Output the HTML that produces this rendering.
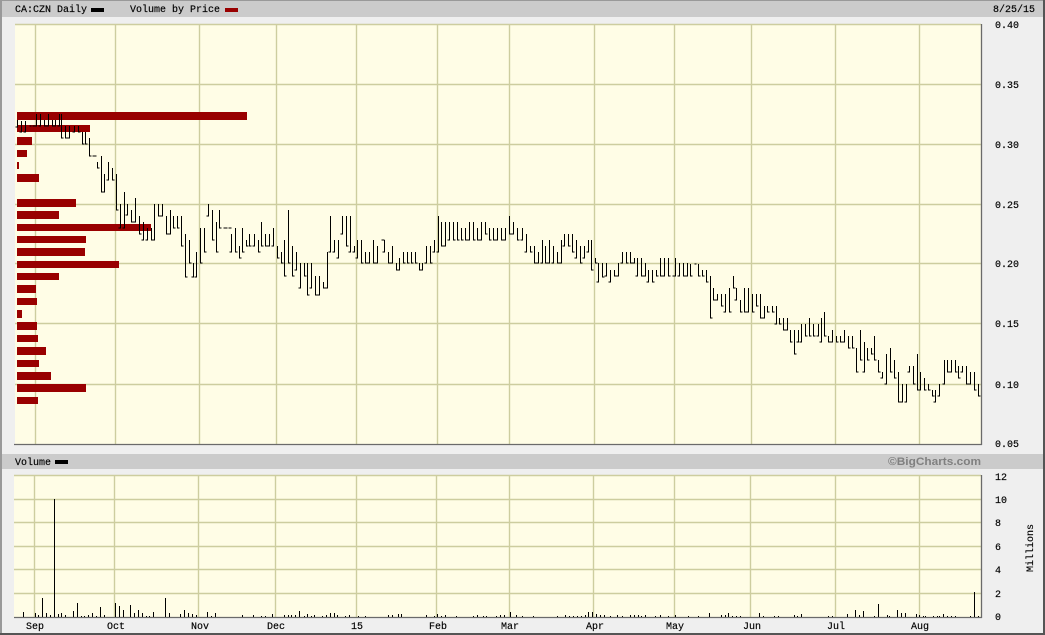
<!DOCTYPE html>
<html><head><meta charset="utf-8"><title>CA:CZN Daily</title>
<style>html,body{margin:0;padding:0;background:#eee;overflow:hidden}svg{display:block}text{font-family:"Liberation Mono",monospace;font-size:10px;fill:#000;stroke:#000;stroke-width:.15px}</style></head>
<body>
<svg width="1045" height="635" viewBox="0 0 1045 635" xmlns="http://www.w3.org/2000/svg">
<rect width="1045" height="635" fill="#efefef"/>
<rect x="2" y="1" width="1041" height="16" fill="#cbcbcb"/>
<rect x="2" y="454" width="1041" height="15" fill="#cbcbcb"/>
<path d="M0.5 0V635" stroke="#999" stroke-width="3" fill="none"/>
<rect x="0" y="0" width="1045" height="1" fill="#999"/>
<rect x="1043" y="0" width="2" height="635" fill="#555"/>
<rect x="0" y="633" width="1045" height="2" fill="#555"/>

<!-- panels -->
<rect x="15" y="24" width="966" height="420" fill="#fffde6"/>
<rect x="14" y="476" width="967" height="141" fill="#fffde6"/>
<g stroke="#cdcd9f" stroke-width="1.4" fill="none">
<path d="M15 84.5H981M15 144.5H981M15 204.5H981M15 263.5H981M15 323.5H981M15 384.5H981M35.5 24V444M115.5 24V444M199.5 24V444M276.5 24V444M356.5 24V444M437.5 24V444M509.5 24V444M594.5 24V444M674.5 24V444M751.5 24V444M835.5 24V444M919.5 24V444"/>
<path d="M14 499.5H981M14 522.5H981M14 546.5H981M14 569.5H981M14 593.5H981M34.5 476V617M114.5 476V617M198.5 476V617M275.5 476V617M356.5 476V617M436.5 476V617M509.5 476V617M593.5 476V617M674.5 476V617M750.5 476V617M835.5 476V617M919.5 476V617"/>
<path d="M15 24.5H981M14 475.5H981"/>
</g>
<g stroke="#6a6a6a" stroke-width="1.3" fill="none">
<path d="M981.5 24V445M14 444.5H982M981.5 475V618M14 617.5H982"/>
</g>

<!-- volume by price -->
<g fill="#990000" shape-rendering="crispEdges">
<rect x="17" y="112" width="230" height="8"/>
<rect x="17" y="125" width="73" height="7"/>
<rect x="17" y="137" width="15" height="8"/>
<rect x="17" y="150" width="10" height="7"/>
<rect x="17" y="162" width="2" height="7"/>
<rect x="17" y="174" width="22" height="8"/>
<rect x="17" y="199" width="59" height="8"/>
<rect x="17" y="211" width="42" height="8"/>
<rect x="17" y="224" width="134" height="7"/>
<rect x="17" y="236" width="69" height="7"/>
<rect x="17" y="248" width="68" height="8"/>
<rect x="17" y="261" width="102" height="7"/>
<rect x="17" y="273" width="42" height="7"/>
<rect x="17" y="285" width="19" height="8"/>
<rect x="17" y="298" width="20" height="7"/>
<rect x="17" y="310" width="5" height="8"/>
<rect x="17" y="322" width="20" height="8"/>
<rect x="17" y="335" width="21" height="7"/>
<rect x="17" y="347" width="29" height="8"/>
<rect x="17" y="360" width="22" height="7"/>
<rect x="17" y="372" width="34" height="8"/>
<rect x="17" y="384" width="69" height="8"/>
<rect x="17" y="397" width="21" height="7"/>
</g>

<!-- price bars -->
<path fill="none" stroke="#000" stroke-width="1" shape-rendering="crispEdges" d="
M17.5 120V127h-2M21.5 121V132h-2M25.5 121V132h-2M29.5 126h2M32.5 126h2M36.5 114V126h-2M40.5 114V126h-2M44.5 120V126h2M48.5 114V126h-2M52.5 120V126h2M55.5 120V126h-2M59.5 114V126h-2M61.5 114V138h2M65.5 126V138h2M69.5 126V138h-2M74.5 126V132h-2M78.5 126V132h2M82.5 132V144h2M85.5 132V144h2M89.5 138V156h2M92.5 156h4M97.5 162V168h2M101.5 156V192h2M104.5 174V192h-2M108.5 162V180h-2M112.5 168V180h2
M116.5 174V210h2M120.5 204V228h-2M124.5 192V228h-2M127.5 204V215h-2M131.5 210V222h2M135.5 198V222h-2M139.5 216V234h2M143.5 222V240h-2M147.5 228V240h-2M151.5 228V240h2M154.5 204V240h-2M158.5 204V216h2M162.5 204V216h-2M166.5 216V234h2M170.5 210V234h-2M173.5 216V228h2M177.5 216V228h2M181.5 216V246h2M185.5 234V277h2M189.5 240V263h2M193.5 263V277h-2M196.5 252V277h-2M200.5 228V263h2M204.5 228V252h2M208.5 204V216h-2M212.5 210V240h2M216.5 222V252h2M219.5 210V228h2M223.5 228h4M228.5 228h3M231.5 234V252h-2M235.5 228V252h2M239.5 246V258h2M242.5 228V252h2M246.5 240V246h2M249.5 234V246h2M254.5 234V246h-2M258.5 240V252h2M261.5 222V246h2M265.5 234V246h2M269.5 234V246h-2M273.5 228V246h-2M277.5 246V258h2M281.5 252V263h2M284.5 240V276h2M288.5 210V263h2M292.5 246V276h2M296.5 252V270h-2M300.5 263V288h-2M304.5 263V276h2M307.5 263V295h2M311.5 263V288h-2M315.5 276V295h2M319.5 276V295h-2M323.5 282V288h2M327.5 252V288h-2M330.5 216V252h-2M334.5 240V252h-2M338.5 240V258h-2M342.5 216V234h-2M346.5 216V246h2M350.5 216V252h-2M354.5 246V252h-2M357.5 240V258h-2M361.5 240V263h2M365.5 252V263h2M369.5 252V263h-2M373.5 240V263h2M377.5 246V263h-2M381.5 240h3M384.5 240V252h-2M388.5 252V263h2M392.5 246V263h-2M396.5 263V270h2M399.5 258V270h-2M403.5 252V263h2M407.5 252V263h2M411.5 252V263h2M415.5 252V263h2M419.5 263V270h2M422.5 263V270h-2M426.5 246V263h-2M430.5 246V263h2M434.5 240V252h-2
M438.5 216V252h-2M441.5 222V246h2M445.5 222V246h-2M449.5 222V240h-2M453.5 222V240h2M457.5 222V240h2M461.5 228V240h2M465.5 228V240h2M469.5 222V240h-2M473.5 222V240h2M477.5 228V240h2M481.5 222V240h-2M485.5 222V234h2M489.5 228V240h2M493.5 228V240h2M497.5 228V240h-2M501.5 228V240h2M505.5 228V240h-2M509.5 216V234h2M513.5 222V234h-2M517.5 228V240h2M522.5 228V240h-2M526.5 234V252h-2M530.5 246V252h2M534.5 246V263h2M538.5 252V263h-2M542.5 240V263h-2M545.5 246V263h2M549.5 240V263h-2M553.5 246V263h-2M557.5 252V263h2M561.5 240V263h-2M564.5 234V246h-2M568.5 234V246h2M572.5 234V252h2M576.5 240V258h-2M580.5 246V263h2M584.5 246V258h-2M588.5 240V252h-2M591.5 240V270h2M595.5 258V263h2M598.5 263V282h-2M602.5 263V277h2M606.5 263V276h-2M610.5 270V282h-2M614.5 270V276h2M618.5 263V276h-2M622.5 252V263h-2M626.5 252V263h2M630.5 252V263h2M634.5 258V263h-2M637.5 258V276h-2M641.5 258V276h2M645.5 263V276h-2M648.5 270V282h-2M652.5 270V282h2M656.5 270V276h2M660.5 258V276h2M664.5 258V276h-2M668.5 258V276h2M672.5 276h3M675.5 258V276h-2M679.5 263V276h-2M683.5 263V276h2M687.5 263V276h-2
M690.5 264V276h2M694.5 264h2M698.5 264V276h2M702.5 270V276h2M706.5 270V282h2M710.5 276V318h2M713.5 288V300h2M717.5 294V300h-2M721.5 294V306h2M725.5 294V312h-2M729.5 288V312h2M733.5 276V288h2M736.5 288V300h-2M740.5 300V312h2M744.5 288V312h2M748.5 288V312h-2M752.5 294V312h2M756.5 294V306h2M760.5 294V318h2M764.5 306V318h-2M767.5 306V312h2M772.5 306V312h2M776.5 306V324h-2M779.5 318V324h2M783.5 318V330h2M787.5 318V330h-2M790.5 330V342h2M794.5 330V354h2M798.5 330V342h-2M801.5 324V342h-2M805.5 324V336h2M809.5 318V336h2M813.5 324V336h2M818.5 324V336h-2M821.5 318V342h-2M824.5 312V336h2M828.5 336V342h2M832.5 330V342h-2M836.5 336V342h2M840.5 336V342h2M844.5 330V342h-2M848.5 336V348h2M852.5 336V348h2M856.5 348V372h2M860.5 330V360h2M864.5 342V372h-2M867.5 348V360h2M871.5 348V354h2M874.5 336V360h2M878.5 360V372h2M882.5 372V378h-2M886.5 354V384h-2M890.5 348V372h2M894.5 360V378h2M898.5 372V402h2M902.5 384V402h-2M906.5 384V402h-2M909.5 366V372h-2M913.5 366V384h2M917.5 354V390h2M920.5 372V390h-2M924.5 378V390h2M928.5 384V390h2M932.5 390V396h2M935.5 390V402h-2M939.5 384V396h-2M944.5 360V384h-2M947.5 360V372h2M951.5 360V372h-2M955.5 360V372h2M958.5 366V378h2M962.5 366V372h-2M966.5 366V384h2M970.5 372V384h-2M974.5 372V390h2M978.5 384V396h2"/>

<!-- volume bars -->
<path fill="none" stroke="#000" stroke-width="1" shape-rendering="crispEdges" d="
M23.5 612V617M35.5 613V617M38.5 615V617M42.5 598V617M46.5 613V617M50.5 615V617M54.5 499V617M58.5 614V617M61.5 613V617M65.5 615V617M73.5 611V617M77.5 603V617M81.5 616V617M84.5 616V617M88.5 615V617M92.5 613V617M96.5 616V617M100.5 607V617M104.5 615V617M115.5 603V617M119.5 606V617M123.5 610V617M130.5 605V617M134.5 613V617M138.5 610V617M142.5 613V617M146.5 616V617M149.5 616V617M153.5 612V617M165.5 598V617M169.5 613V617M180.5 614V617M184.5 610V617M188.5 613V617M192.5 614V617M196.5 615V617M207.5 612V617M211.5 616V617M215.5 613V617M242.5 615V617M253.5 615V617M261.5 616V617M265.5 616V617M272.5 614V617M284.5 615V617M288.5 615V617M291.5 615V617M295.5 615V617M299.5 611V617M304.5 616V617M307.5 614V617M311.5 616V617M314.5 615V617M322.5 616V617M326.5 615V617M330.5 613V617M334.5 613V617M337.5 615V617M345.5 616V617M349.5 615V617
M358.5 616V617M365.5 616V617M388.5 615V617M392.5 615V617M398.5 614V617M401.5 614V617M426.5 615V617M434.5 616V617M437.5 614V617M441.5 616V617M445.5 615V617M456.5 616V617M473.5 616V617M477.5 615V617M483.5 616V617M486.5 616V617M496.5 616V617M500.5 615V617M504.5 615V617M510.5 612V617M516.5 615V617M522.5 616V617M533.5 616V617M557.5 616V617M565.5 615V617M569.5 616V617M573.5 616V617M577.5 616V617M581.5 616V617M585.5 615V617M588.5 612V617M592.5 612V617M596.5 614V617M600.5 615V617M604.5 615V617M610.5 616V617M617.5 615V617M622.5 616V617M630.5 615V617M634.5 615V617M638.5 615V617M641.5 616V617M645.5 615V617M655.5 616V617M660.5 615V617M668.5 616V617M675.5 615V617M688.5 616V617M698.5 616V617M709.5 613V617
M721.5 615V617M725.5 615V617M728.5 613V617M732.5 616V617M736.5 616V617M740.5 616V617M759.5 613V617M763.5 616V617M774.5 616V617M778.5 616V617M794.5 615V617M797.5 616V617M801.5 614V617M828.5 616V617M832.5 616V617M847.5 614V617M855.5 610V617M859.5 615V617M863.5 611V617M874.5 616V617M878.5 604V617M887.5 615V617M889.5 616V617M897.5 610V617M901.5 613V617M905.5 613V617M916.5 614V617M919.5 615V617M923.5 616V617M925.5 616V617M933.5 616V617M937.5 616V617M939.5 616V617M943.5 614V617M947.5 616V617M951.5 616V617M955.5 616V617M970.5 616V617M974.5 592V617M978.5 616V617"/>

<!-- legends -->
<text x="15" y="12">CA:CZN Daily</text>
<rect x="91" y="8" width="13" height="4" fill="#000"/>
<text x="130" y="12">Volume by Price</text>
<rect x="225" y="8" width="13" height="4" fill="#990000"/>
<text x="993" y="12">8/25/15</text>
<text x="15" y="465">Volume</text>
<rect x="55" y="460" width="13" height="4" fill="#000"/>
<text x="888" y="465" textLength="93" lengthAdjust="spacingAndGlyphs" style="font-family:'Liberation Sans',sans-serif;font-weight:bold;font-size:11px;fill:#808080;stroke:none">©BigCharts.com</text>

<!-- price axis -->
<text x="995" y="28">0.40</text>
<text x="995" y="88">0.35</text>
<text x="995" y="148">0.30</text>
<text x="995" y="208">0.25</text>
<text x="995" y="267">0.20</text>
<text x="995" y="327">0.15</text>
<text x="995" y="388">0.10</text>
<text x="995" y="447">0.05</text>

<!-- volume axis -->
<text x="995" y="480">12</text>
<text x="995" y="503">10</text>
<text x="995" y="526">8</text>
<text x="995" y="550">6</text>
<text x="995" y="573">4</text>
<text x="995" y="597">2</text>
<text x="995" y="620">0</text>
<text transform="translate(1033,572) rotate(-90)" x="0" y="0">Millions</text>

<!-- date axis -->
<text x="26" y="629">Sep</text>
<text x="107" y="629">Oct</text>
<text x="191" y="629">Nov</text>
<text x="267" y="629">Dec</text>
<text x="351" y="629">15</text>
<text x="429" y="629">Feb</text>
<text x="501" y="629">Mar</text>
<text x="586" y="629">Apr</text>
<text x="666" y="629">May</text>
<text x="743" y="629">Jun</text>
<text x="827" y="629">Jul</text>
<text x="911" y="629">Aug</text>
</svg>
</body></html>
